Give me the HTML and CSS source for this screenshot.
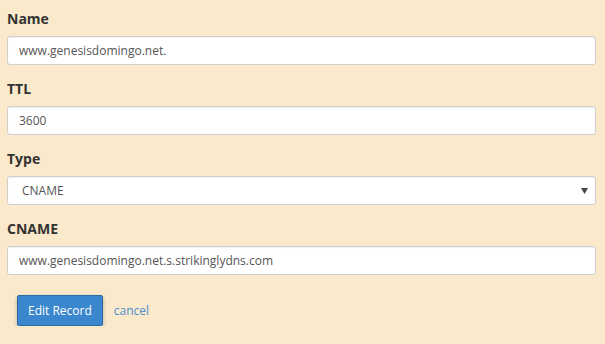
FILE: index.html
```html
<!DOCTYPE html>
<html>
<head>
<meta charset="utf-8">
<link rel="stylesheet" href="styles.css">
</head>
<body>
<form class="form">
  <div class="field">
    <label class="label">Name</label>
    <input class="input" type="text" value="www.genesisdomingo.net.">
  </div>
  <div class="field">
    <label class="label">TTL</label>
    <input class="input" type="text" value="3600">
  </div>
  <div class="field">
    <label class="label">Type</label>
    <div class="select">
      <span class="select-text">CNAME</span>
      <svg class="caret" width="7" height="6" viewBox="0 0 7 6"><path d="M0 0H7L3.5 6Z" fill="#444"/></svg>
    </div>
  </div>
  <div class="field">
    <label class="label">CNAME</label>
    <input class="input" type="text" value="www.genesisdomingo.net.s.strikinglydns.com">
  </div>
  <div class="actions">
    <button class="btn" type="button">Edit Record</button>
    <a class="cancel" href="#">cancel</a>
  </div>
</form>
</body>
</html>
```
FILE: styles.css
```css
html, body {
  margin: 0;
  padding: 0;
  background: #fae9cb;
  font-family: "Open Sans", "Liberation Sans", sans-serif;
}
.form {
  padding: 9px 9px 0 7px;
}
.field {
  display: flex;
  flex-direction: column;
  margin-bottom: 14px;
}
.label {
  font-size: 14px;
  font-weight: 700;
  color: #333;
  line-height: 20px;
  height: 20px;
  margin-bottom: 7px;
}
.input, .select {
  box-sizing: border-box;
  height: 29px;
  width: 100%;
  border: 1px solid #cfcfcf;
  border-radius: 3px;
  background: #fff;
  padding: 0 11px;
  font-family: "Open Sans", "Liberation Sans", sans-serif;
  font-size: 12px;
  color: #555;
  box-shadow: inset 0 1px 1px rgba(0,0,0,0.06);
  outline: none;
  margin: 0;
}
.select {
  display: flex;
  align-items: center;
  justify-content: space-between;
  padding: 0 7px 0 14px;
}
.select-text {
  font-size: 12px;
  color: #555;
}
.caret {
  display: block;
}
.actions {
  display: flex;
  align-items: center;
  padding: 6px 0 0 10px;
}
.btn {
  box-sizing: border-box;
  height: 31px;
  padding: 0 10px;
  background: #3a87ce;
  border: 1px solid #2e6aa5;
  border-radius: 2px;
  color: #fff;
  font-family: "Open Sans", "Liberation Sans", sans-serif;
  font-size: 12px;
  box-shadow: 0 2px 4px rgba(0,0,0,0.25);
}
.cancel {
  margin-left: 11px;
  font-size: 12px;
  color: #4a8fd0;
  text-decoration: none;
}
```
